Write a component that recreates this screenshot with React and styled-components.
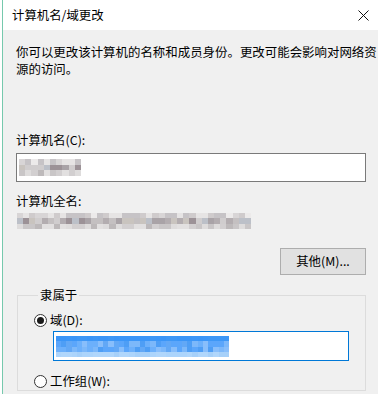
import React from "react";
import styled, { createGlobalStyle } from "styled-components";

const GlobalStyle = createGlobalStyle`
  html, body { margin: 0; padding: 0; background: #ffffff; }
  body {
    font-family: "Noto Sans CJK SC", "Microsoft YaHei UI", sans-serif;
    font-size: 12.4px;
    color: #000;
  }
  * { box-sizing: border-box; }
`;

const Window = styled.div`
  width: 376px;
  height: 394px;
  margin-left: 2px;
  border-left: 1px solid #76c9ad;
  background: #f0f0f0;
  overflow: hidden;
  display: flex;
  flex-direction: column;
`;

const TitleBar = styled.div`
  height: 30px;
  flex: none;
  background: #ffffff;
  display: flex;
  align-items: center;
  justify-content: space-between;
  padding: 0 9px 0 9px;
`;

const Title = styled.div`
  font-size: 12.4px;
  line-height: 17px;
  color: #000;
`;

const CloseIcon = styled.svg`
  width: 11px;
  height: 11px;
  display: block;
`;

const Body = styled.div`
  padding: 0 12px 0 13px;
  display: flex;
  flex-direction: column;
`;

const Description = styled.p`
  margin: 14px 0 0 0;
  line-height: 17px;
  font-size: 12.45px;
  white-space: nowrap;
`;

const Label = styled.div`
  line-height: 17px;
  margin-top: ${(p) => p.$mt}px;
`;

const TextBox = styled.div`
  height: ${(p) => p.$h}px;
  margin-top: ${(p) => p.$mt}px;
  margin-left: ${(p) => p.$ml || 0}px;
  background: #ffffff;
  border: 1px solid ${(p) => (p.$focused ? "#0078d7" : "#7a7a7a")};
  display: flex;
  align-items: center;
  padding-left: ${(p) => p.$pl}px;
`;

const MosaicWrap = styled.div`
  margin-top: ${(p) => p.$mt || 0}px;
  margin-left: ${(p) => p.$ml || 0}px;
  display: flex;
`;

const ButtonRow = styled.div`
  display: flex;
  justify-content: flex-end;
  margin-top: 19px;
`;

const Button = styled.button`
  width: 86px;
  height: 27px;
  background: #e1e1e1;
  border: 1px solid #adadad;
  font-family: inherit;
  font-size: 12.4px;
  color: #000;
  padding: 0;
  line-height: 17px;
`;

const GroupBox = styled.fieldset`
  margin: 12px 0 0 1px;
  border: 1px solid #dcdcdc;
  padding: 8px 16px 0 16px;
  min-width: 0;
`;

const Legend = styled.legend`
  margin-left: 4px;
  padding: 0 2px;
  line-height: 17px;
`;

const RadioRow = styled.label`
  display: flex;
  align-items: center;
  line-height: 17px;
  margin-top: ${(p) => p.$mt || 0}px;
`;

const RadioCircle = styled.span`
  width: 13px;
  height: 13px;
  border-radius: 50%;
  border: 1px solid #333333;
  background: #ffffff;
  margin-right: 3px;
  display: flex;
  align-items: center;
  justify-content: center;
  flex: none;
  &::after {
    content: "";
    width: 7px;
    height: 7px;
    border-radius: 50%;
    background: ${(p) => (p.$checked ? "#1a1a1a" : "transparent")};
  }
`;

function rng(seed) {
  let s = seed >>> 0;
  return () => {
    s = (s * 1664525 + 1013904223) >>> 0;
    return s / 4294967296;
  };
}

function Mosaic({ w, h, cols, rows, palettes, seed }) {
  const r = rng(seed);
  const cw = w / cols;
  const rh = h / rows;
  const rects = [];
  for (let y = 0; y < rows; y++) {
    const pal = palettes[Math.min(y, palettes.length - 1)];
    for (let x = 0; x < cols; x++) {
      const c = pal[Math.floor(r() * pal.length)];
      rects.push(
        <rect
          key={`${x}-${y}`}
          x={x * cw}
          y={y * rh}
          width={cw + 0.5}
          height={rh + 0.5}
          fill={c}
        />
      );
    }
  }
  return (
    <svg width={w} height={h} viewBox={`0 0 ${w} ${h}`} shapeRendering="crispEdges" style={{ display: "block" }}>
      {rects}
    </svg>
  );
}

const grayTop = ["#e6e4e4", "#d8d5d6", "#cfcbcc", "#eceaea", "#c6c3c6"];
const grayMid = ["#b3adb0", "#c4c0c1", "#a9a3a7", "#d0cdce", "#bcc0c8", "#9c9297", "#c9c4bf"];
const grayBot = ["#d2cfd0", "#c9c6c7", "#dedcdc", "#bdb9ba", "#e2e0e0"];

const blueTop = ["#3a95f7", "#3b96f8", "#3d97f6"];
const blueMid = ["#5ba6fb", "#6cb0fb", "#4e9ef5", "#7cb8fa", "#62a8f6", "#88befb"];
const blueBot = ["#acd4fb", "#b0d6fb", "#a6d0f9"];

export default function App() {
  return (
    <>
      <GlobalStyle />
      <Window>
        <TitleBar>
          <Title>计算机名/域更改</Title>
          <CloseIcon viewBox="0 0 11 11">
            <path d="M0.5 0.5 L10.5 10.5 M10.5 0.5 L0.5 10.5" stroke="#111" strokeWidth="1" fill="none" />
          </CloseIcon>
        </TitleBar>
        <Body>
          <Description>
            你可以更改该计算机的名称和成员身份。更改可能会影响对网络资
            <br />
            源的访问。
          </Description>
          <Label $mt={54}>计算机名(C):</Label>
          <TextBox $h={29} $mt={3.5} $pl={2}>
            <Mosaic w={62} h={17} cols={10} rows={3} palettes={[grayTop, grayMid, grayBot]} seed={7} />
          </TextBox>
          <Label $mt={11.5}>计算机全名:</Label>
          <MosaicWrap $mt={2.5} $ml={1}>
            <Mosaic w={234} h={16} cols={38} rows={3} palettes={[grayTop, grayMid, grayBot]} seed={42} />
          </MosaicWrap>
          <ButtonRow>
            <Button type="button">其他(M)...</Button>
          </ButtonRow>
          <GroupBox>
            <Legend>隶属于</Legend>
            <RadioRow>
              <RadioCircle $checked />
              域(D):
            </RadioRow>
            <TextBox $h={30} $mt={2.5} $ml={19} $pl={2} $focused>
              <Mosaic w={173} h={21} cols={33} rows={4} palettes={[blueTop, blueMid, blueMid, blueBot]} seed={11} />
            </TextBox>
            <RadioRow $mt={11.5}>
              <RadioCircle />
              工作组(W):
            </RadioRow>
          </GroupBox>
        </Body>
      </Window>
    </>
  );
}
